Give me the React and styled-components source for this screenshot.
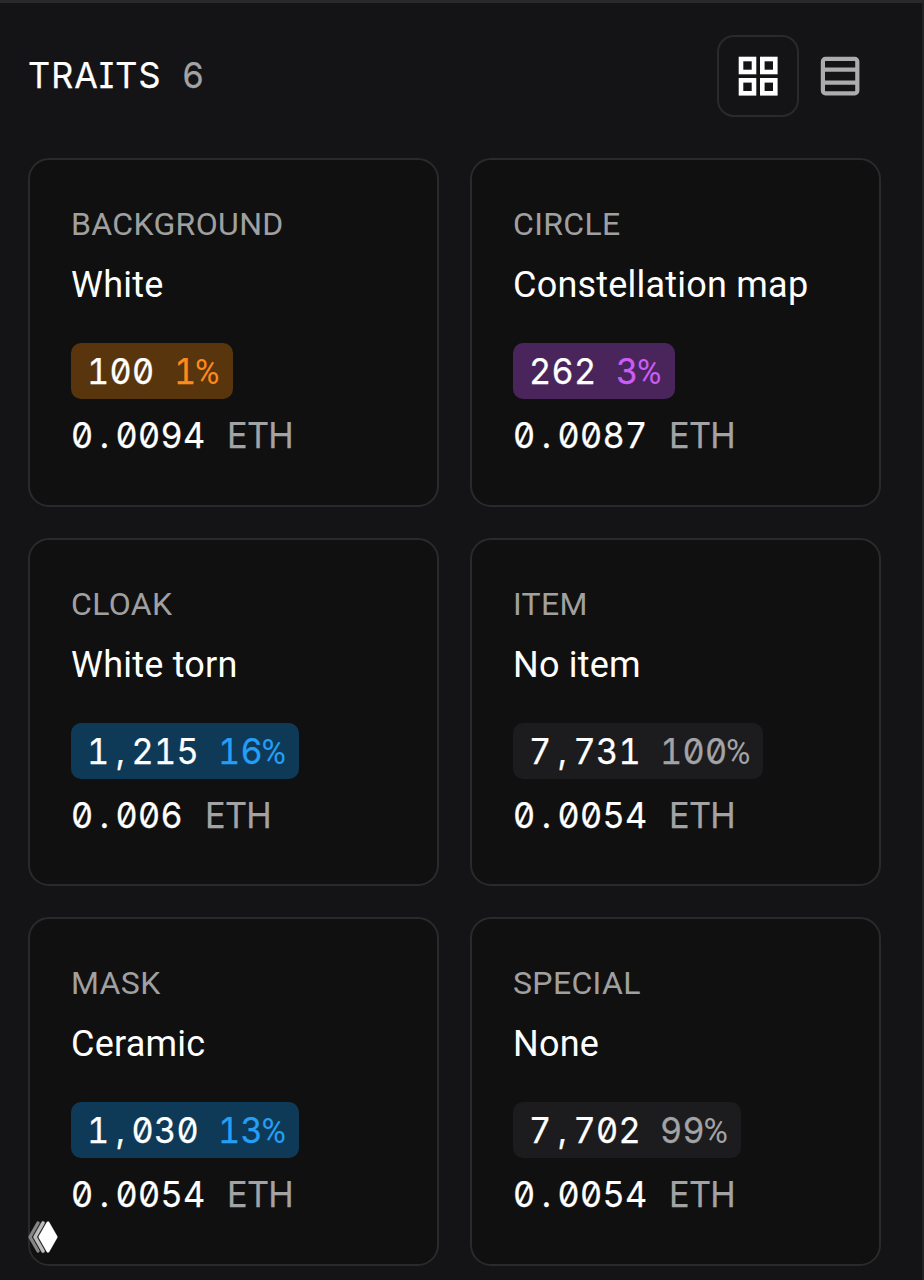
import React from 'react';
import styled, { createGlobalStyle } from 'styled-components';

const GlobalStyle = createGlobalStyle`
  * { box-sizing: border-box; }
  body { margin: 0; background: #141416; }
`;

const SANS = `Roboto, "Liberation Sans", sans-serif`;
const NUMERIC = `Inter, "Liberation Mono", monospace`;

const Panel = styled.main`
  position: relative;
  width: 924px;
  height: 1280px;
  overflow: hidden;
  padding: 33px 41px 0 28px;
  border-top: 3px solid #29292c;
  border-right: 2px solid #222225;
  background: #141416;
  color: #fff;
  font-family: ${SANS};
`;

const Header = styled.header`
  display: flex;
  align-items: center;
  justify-content: space-between;
  height: 80px;
`;

const Title = styled.h1`
  display: flex;
  gap: 22px;
  margin: 0 0 2px;
  font: 400 36px/44px ${NUMERIC};
  font-feature-settings: "tnum", "zero", "ss02";
`;

/* Condensed text laid out on 22px character columns. */
const Mono = styled.span`
  display: block;
  width: ${(p) => p.$chars * 22}px;
  color: ${(p) => p.$color || 'inherit'};
  letter-spacing: ${(p) => p.$spacing ?? 0.33}px;
  white-space: nowrap;
  transform: scaleX(0.95);
  transform-origin: left center;
  -webkit-text-stroke: 0.25px currentColor;
`;

const Mark = styled.span`
  display: inline-block;
  width: 23.1px;
  text-align: center;
  letter-spacing: 0;
`;

const PercentSign = styled.span`
  margin-left: -1.5px;
  font-family: Roboto, sans-serif;
  font-size: 35px;
  line-height: 0;
  -webkit-text-stroke: 0;
`;

const ViewSwitch = styled.div`
  display: flex;
`;

const ViewButton = styled.button`
  display: grid;
  place-items: center;
  width: 82px;
  height: 82px;
  padding: 0;
  border: 2px solid ${(p) => (p.$active ? '#2a2a2d' : 'transparent')};
  border-radius: 17px;
  background: transparent;
  color: ${(p) => (p.$active ? '#fff' : '#acacae')};
`;

const Grid = styled.section`
  display: grid;
  grid-template-columns: 411px 411px;
  gap: 31px;
  margin-top: 42px;
`;

const Card = styled.article`
  height: 348.67px;
  padding: 40px 41px 0;
  border: 2px solid #2a2a2d;
  border-radius: 21px;
  background: #101010;
`;

const Label = styled.div`
  height: 48px;
  color: #a0a0a0;
  font-size: 32px;
  line-height: 48px;
  letter-spacing: 0.35px;
`;

const Value = styled.div`
  height: 54px;
  margin-top: 10px;
  font-size: 36px;
  line-height: 54px;
  letter-spacing: 0.22px;
  white-space: nowrap;
`;

const Badge = styled.div`
  display: flex;
  align-items: center;
  gap: 21px;
  width: fit-content;
  height: 56px;
  margin-top: 31px;
  padding: 0 15.5px;
  border-radius: 10px;
  background: ${(p) => p.$bg};
  font: 400 36px/56px ${NUMERIC};
  font-feature-settings: "tnum", "zero", "ss02";
`;

const Price = styled.div`
  display: flex;
  gap: 24px;
  margin-top: 13px;
  font: 400 36px/46px ${NUMERIC};
  font-feature-settings: "tnum", "zero", "ss02";
`;

const Logo = styled.svg`
  position: absolute;
  left: 27px;
  top: 1217px;
`;

const MUTED = '#a3a3a5';

const TONES = {
  orange: ['#59350d', '#ff8a1c'],
  purple: ['#4a255c', '#cb5cf5'],
  blue: ['#0e3a58', '#249ff5'],
  gray: ['#1c1c1f', MUTED],
};

const TRAITS = [
  { label: 'BACKGROUND', value: 'White', count: '100', percent: '1', price: '0.0094', tone: 'orange' },
  { label: 'CIRCLE', value: 'Constellation map', count: '262', percent: '3', price: '0.0087', tone: 'purple' },
  { label: 'CLOAK', value: 'White torn', count: '1,215', percent: '16', price: '0.006', tone: 'blue' },
  { label: 'ITEM', value: 'No item', count: '7,731', percent: '100', price: '0.0054', tone: 'gray' },
  { label: 'MASK', value: 'Ceramic', count: '1,030', percent: '13', price: '0.0054', tone: 'blue' },
  { label: 'SPECIAL', value: 'None', count: '7,702', percent: '99', price: '0.0054', tone: 'gray' },
];

function Figure({ text }) {
  return (
    <Mono $chars={text.length}>
      {text.split(/([.,])/).map((part, i) => (i % 2 ? <Mark key={i}>{part}</Mark> : part))}
    </Mono>
  );
}

function GridIcon() {
  return (
    <svg width="40" height="40" viewBox="0 0 40 40" fill="none" stroke="currentColor" strokeWidth="4.6">
      <rect x="3" y="3" width="13" height="13" />
      <rect x="24.3" y="3" width="13" height="13" />
      <rect x="3" y="24.3" width="13" height="13" />
      <rect x="24.3" y="24.3" width="13" height="13" />
    </svg>
  );
}

function RowsIcon() {
  return (
    <svg width="40" height="40" viewBox="0 0 40 40" fill="none" stroke="currentColor" strokeWidth="4.2">
      <rect x="2.9" y="2.9" width="34.4" height="34.4" rx="2.5" />
      <path d="M3 13.6h34M3 26.6h34" />
    </svg>
  );
}

function Trait({ trait }) {
  const [bg, color] = TONES[trait.tone];
  return (
    <Card>
      <Label>{trait.label}</Label>
      <Value>{trait.value}</Value>
      <Badge $bg={bg}>
        <Figure text={trait.count} />
        <Mono $chars={trait.percent.length + 1} $color={color}>
          {trait.percent}
          <PercentSign>%</PercentSign>
        </Mono>
      </Badge>
      <Price>
        <Figure text={trait.price} />
        <Mono $chars={3} $color={MUTED} $spacing={-0.7}>ETH</Mono>
      </Price>
    </Card>
  );
}

export default function App() {
  return (
    <>
      <GlobalStyle />
      <Panel>
        <Header>
          <Title>
            <Mono $chars={6} $spacing={1.2}>TRAITS</Mono>
            <Mono $chars={1} $color={MUTED}>6</Mono>
          </Title>
          <ViewSwitch>
            <ViewButton $active aria-label="Grid view"><GridIcon /></ViewButton>
            <ViewButton aria-label="List view"><RowsIcon /></ViewButton>
          </ViewSwitch>
        </Header>
        <Grid>
          {TRAITS.map((trait) => <Trait key={trait.label} trait={trait} />)}
        </Grid>
        <Logo width="32" height="36" viewBox="0 0 32 36" fill="none" strokeLinejoin="round" strokeLinecap="round">
          <path d="M11 3L3 17L11 31" stroke="#858585" strokeWidth="3.4" />
          <path d="M16 3L8 17L16 31" stroke="#404040" strokeWidth="4.4" />
          <path d="M16 3L8 17L16 31" stroke="#bcbcbc" strokeWidth="3.4" />
          <path d="M21 3L13 17L21 31L29 17Z" fill="#505050" stroke="#505050" strokeWidth="3.6" />
          <path d="M21 3L13 17L21 31L29 17Z" fill="#fff" stroke="#fff" strokeWidth="2.8" />
        </Logo>
      </Panel>
    </>
  );
}
